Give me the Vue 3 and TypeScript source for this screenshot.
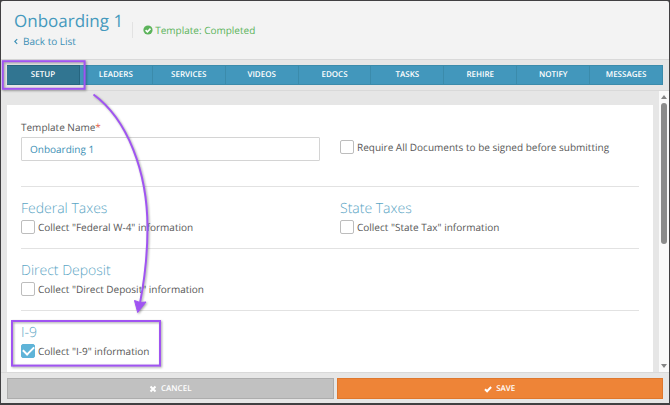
<script setup lang="ts">
import { reactive, ref } from 'vue'

interface Tab {
  id: string
  label: string
}

interface Section {
  id: string
  title: string
  label: string
}

const tabs: Tab[] = [
  { id: 'setup', label: 'Setup' },
  { id: 'leaders', label: 'Leaders' },
  { id: 'services', label: 'Services' },
  { id: 'videos', label: 'Videos' },
  { id: 'edocs', label: 'eDocs' },
  { id: 'tasks', label: 'Tasks' },
  { id: 'rehire', label: 'Rehire' },
  { id: 'notify', label: 'Notify' },
  { id: 'messages', label: 'Messages' },
]

const rows: Section[][] = [
  [
    { id: 'federal', title: 'Federal Taxes', label: 'Collect "Federal W-4" information' },
    { id: 'state', title: 'State Taxes', label: 'Collect "State Tax" information' },
  ],
  [{ id: 'deposit', title: 'Direct Deposit', label: 'Collect "Direct Deposit" information' }],
  [{ id: 'i9', title: 'I-9', label: 'Collect "I-9" information' }],
]

const activeTab = ref('setup')
const templateName = ref('Onboarding 1')
const requireAll = ref(false)
const checked = reactive<Record<string, boolean>>({
  federal: false,
  state: false,
  deposit: false,
  i9: true,
})
</script>

<template>
  <div class="window">
    <header class="header">
      <div class="heading">
        <h1>Onboarding 1</h1>
        <a href="#" class="back">
          <svg class="chevron" viewBox="0 0 5 8" aria-hidden="true"><path d="M4 1 1 4l3 3" /></svg>
          Back to List
        </a>
      </div>
      <div class="status">
        <svg viewBox="0 0 10 10" aria-hidden="true">
          <circle cx="5" cy="5" r="4.6" />
          <path d="M2.6 5.1 4.4 6.8 7.5 3.6" />
        </svg>
        <span>Template: Completed</span>
      </div>
    </header>

    <nav class="tabs">
      <button
        v-for="tab in tabs"
        :key="tab.id"
        type="button"
        :class="{ active: tab.id === activeTab }"
        @click="activeTab = tab.id"
      >
        {{ tab.label }}
      </button>
    </nav>

    <main class="body">
      <form id="setup-form" class="card" @submit.prevent>
        <div class="row first">
          <div class="field">
            <label for="template-name">Template Name<span class="required">*</span></label>
            <input id="template-name" v-model="templateName" type="text" />
          </div>
          <label class="check aligned">
            <input v-model="requireAll" type="checkbox" />
            <span>Require All Documents to be signed before submitting</span>
          </label>
        </div>
        <div v-for="(row, index) in rows" :key="index" class="row">
          <section v-for="section in row" :key="section.id">
            <h2>{{ section.title }}</h2>
            <label class="check">
              <input v-model="checked[section.id]" type="checkbox" />
              <span>{{ section.label }}</span>
            </label>
          </section>
        </div>
      </form>
      <div class="scrollbar" aria-hidden="true">
        <svg viewBox="0 0 6 4"><path d="M3 0 6 4H0z" /></svg>
        <div class="track"><div class="thumb"></div></div>
        <svg viewBox="0 0 6 4"><path d="M0 0h6L3 4z" /></svg>
      </div>
    </main>

    <footer class="actions">
      <button type="button" class="cancel">
        <svg viewBox="0 0 8 8" aria-hidden="true"><path d="m1.5 1.5 5 5m0-5-5 5" /></svg>
        Cancel
      </button>
      <button type="submit" form="setup-form" class="save">
        <svg viewBox="0 0 8 8" aria-hidden="true"><path d="m1 4.2 2.1 2.1L7.1 2" /></svg>
        Save
      </button>
    </footer>

    <svg class="callout" width="670" height="405" viewBox="0 0 670 405" aria-hidden="true">
      <rect x="2.8" y="61.2" width="81.8" height="27.6" />
      <rect x="12" y="321" width="148" height="44.6" />
      <path class="curve" d="M93.500 94.500C127 119 147.500 171 147.500 228C147.500 254 144.500 280 140 303" />
      <path class="head" d="M134.500 300.500 140 302.500 146 302 137.700 312.500z" />
    </svg>
  </div>
</template>

<style>
body {
  background: #414042;
}
</style>

<style scoped>
* {
  box-sizing: border-box;
}

.window {
  position: relative;
  display: flex;
  flex-direction: column;
  height: 100vh;
  padding: 1px 1px 2px;
  overflow: hidden;
  background: #414042;
  color: #585858;
  font: 10px/16px "Open Sans", "Noto Sans", sans-serif;
  text-rendering: geometricPrecision;
}

button,
input {
  margin: 0;
  font: inherit;
  text-rendering: inherit;
}

.header {
  display: flex;
  align-items: flex-start;
  gap: 9px;
  height: 58px;
  padding: 8px 13px;
  border-radius: 2px 2px 0 0;
  background: #f3f3f3;
}

h1 {
  margin: 0;
  color: #4499bd;
  font-size: 17px;
  font-weight: 400;
  line-height: 24px;
}

.back {
  display: flex;
  align-items: center;
  gap: 5px;
  color: #3d90b5;
  text-decoration: none;
}

.chevron {
  width: 4px;
  height: 7px;
  fill: none;
  stroke: currentColor;
  stroke-width: 1.4;
}

.status {
  display: flex;
  align-items: center;
  gap: 2px;
  height: 16px;
  margin-top: 13px;
  padding-left: 10px;
  border-left: 1px solid #e2e2e2;
  color: #5cb35b;
}

.status svg {
  width: 10px;
  height: 10px;
  fill: #5cb35b;
}

.status path {
  fill: none;
  stroke: #fff;
  stroke-width: 1.6;
}

.tabs {
  display: flex;
  padding: 5px 6px;
  border-top: 1px solid #d9d9d9;
  border-bottom: 1px solid #d9d9d9;
  background: #e6e6e6;
}

.tabs button {
  flex: 1 1 0;
  height: 20px;
  padding: 0;
  border: 1px solid #3b8bab;
  border-width: 1px 1px 1px 0;
  background: #4297bc;
  color: #fff;
  font-size: 8px;
  font-weight: 600;
  line-height: 18px;
  text-transform: uppercase;
}

.tabs .active {
  border-color: #266580;
  background: #317591;
}

.body {
  display: flex;
  flex: 1 1 0;
  gap: 6px;
  min-height: 0;
  padding-left: 6px;
  overflow: hidden;
  background: #e6e6e6;
}

.card {
  flex: 1;
  align-self: flex-start;
  min-height: 100%;
  margin-top: 14px;
  padding: 0 14px;
  background: #fff;
}

.row {
  display: grid;
  grid-template-columns: 1fr 1fr;
  gap: 20px;
  padding: 12px 0 13px;
  border-top: 1px solid #e2e2e2;
}

.first {
  padding: 14px 0 25px;
  border-top: 0;
}

.field {
  display: flex;
  flex-direction: column;
  gap: 2px;
}

.required {
  color: #e2604a;
}

.field input {
  width: 100%;
  height: 24px;
  padding: 0 8px;
  border: 1px solid #d4d4d4;
  border-radius: 1px;
  outline: 0;
  background: #fff;
  color: #3d90b5;
}

h2 {
  margin: 0;
  color: #5ba5c4;
  font-size: 14px;
  font-weight: 300;
  line-height: 20px;
}

.check {
  display: flex;
  align-items: center;
  gap: 3px;
}

.aligned {
  align-self: start;
  margin-top: 20px;
}

.check input {
  display: grid;
  place-items: center;
  width: 14px;
  height: 14px;
  border: 1px solid #bdbdbd;
  border-radius: 2px;
  appearance: none;
  background: #fff;
}

.check input:checked {
  border-color: #5fb4d8;
  background: #5fb4d8;
}

.check input:checked::before {
  width: 9px;
  height: 5px;
  margin-bottom: 3px;
  border: solid #fff;
  border-width: 0 0 2px 2px;
  content: "";
  transform: rotate(-45deg);
}

.scrollbar {
  display: flex;
  flex-direction: column;
  align-items: center;
  gap: 4px;
  width: 10px;
  padding: 4px 0;
  background: #fafafa;
}

.scrollbar svg {
  width: 6px;
  height: 4px;
  fill: #858585;
}

.track {
  flex: 1;
  width: 6px;
}

.thumb {
  height: 55%;
  border-radius: 3px;
  background: #8b8b8b;
}

.actions {
  display: flex;
  gap: 3px;
  padding: 5px 6px 4px;
  border-top: 1px solid #d9d9d9;
  background: #e6e6e6;
}

.actions button {
  display: flex;
  flex: 1 1 0;
  align-items: center;
  justify-content: center;
  gap: 4px;
  height: 21px;
  padding: 0;
  border: 1px solid;
  color: #fff;
  font-size: 8px;
  font-weight: 600;
  text-transform: uppercase;
}

.actions svg {
  width: 8px;
  height: 8px;
  fill: none;
  stroke: currentColor;
  stroke-width: 2;
}

.actions .cancel {
  border-color: #adadad;
  background: #c1c1c1;
}

.actions .save {
  border-color: #df772c;
  background: #ee8437;
}

.callout {
  position: absolute;
  top: 0;
  left: 0;
  fill: none;
  stroke: #a054f2;
  stroke-width: 2;
  pointer-events: none;
  filter: drop-shadow(1px 1px 1px rgb(0 0 0 / 35%));
}

.head {
  fill: #a054f2;
  stroke-width: 1;
}
</style>
